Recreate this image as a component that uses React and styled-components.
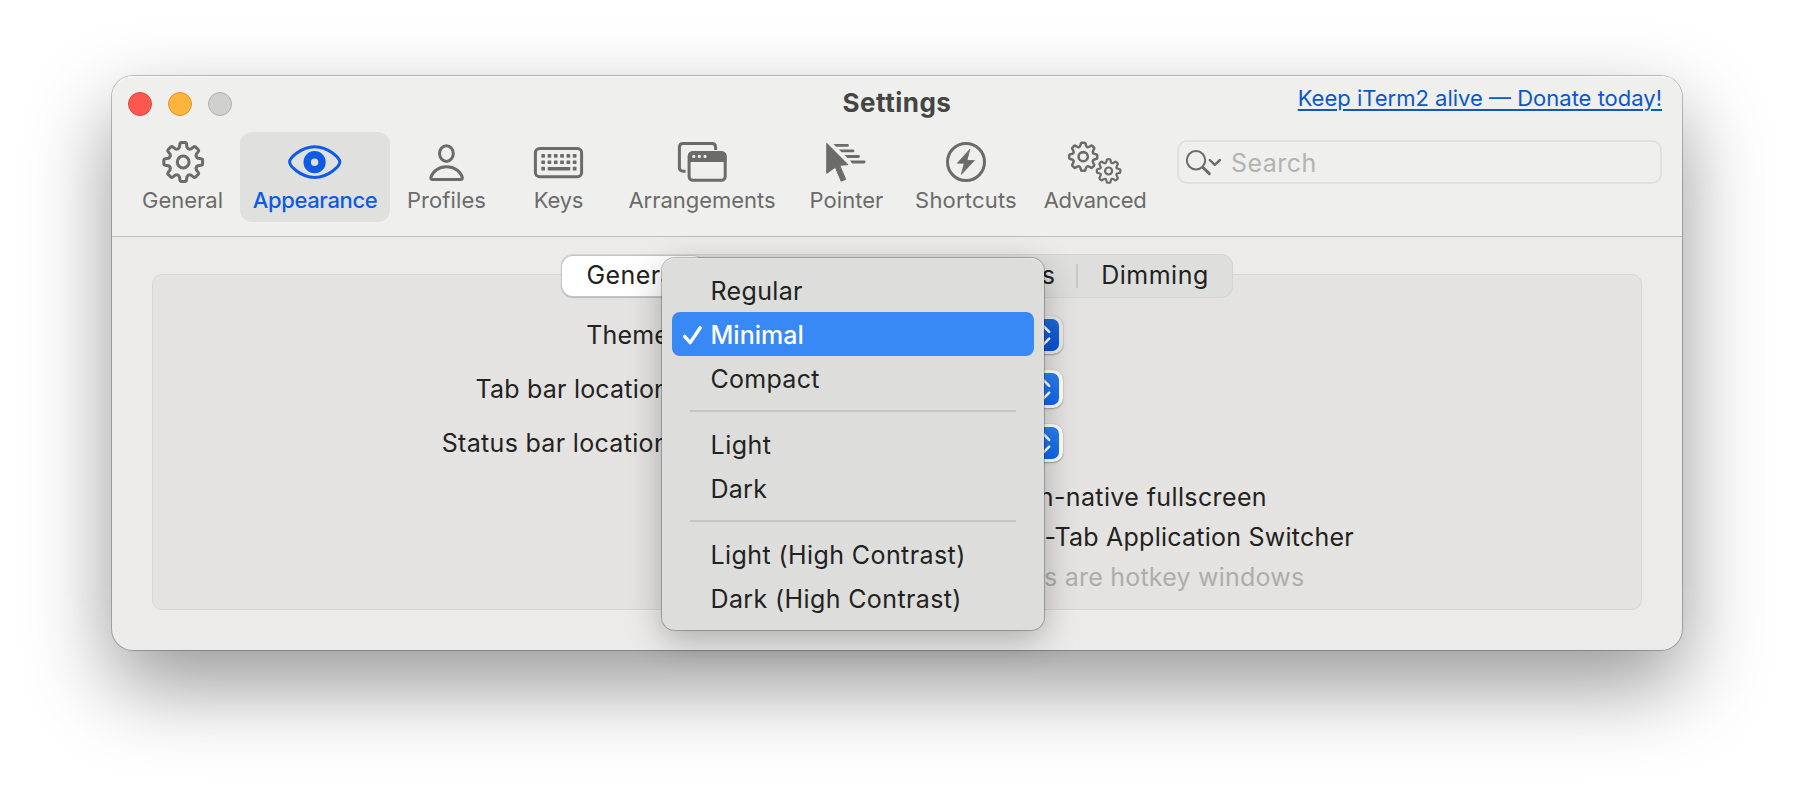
import React from "react";
import styled, { createGlobalStyle, css } from "styled-components";

const color = {
  header: "#efefed",
  body: "#ecebe9",
  panel: "#e4e3e1",
  menu: "#dddddb",
  highlight: "#3888f6",
  text: "#222221",
  icon: "#6b6b69",
  accent: "#0d5be6",
  link: "#0a59c5",
};

const GlobalStyle = createGlobalStyle`
  * { box-sizing: border-box; }
  body {
    margin: 0;
    background: #fff;
    font-family: Inter, "Liberation Sans", sans-serif;
    color: ${color.text};
  }
`;

const Desktop = styled.div`
  width: 1794px;
  height: 798px;
  padding: 76px 112px;
  overflow: hidden;
`;

const Window = styled.main`
  position: relative;
  display: flex;
  flex-direction: column;
  width: 1570px;
  height: 574px;
  border-radius: 21px;
  background: ${color.body};
  box-shadow:
    0 0 0 1px rgba(0, 0, 0, 0.23),
    0 35px 84px rgba(0, 0, 0, 0.41);
`;

const Header = styled.header`
  height: 161px;
  background: ${color.header};
  border-bottom: 1px solid #bebebc;
  border-radius: 21px 21px 0 0;
  box-shadow: inset 0 1px 0 #fafaf9;
`;

const TitleBar = styled.div`
  display: grid;
  grid-template-columns: 1fr auto 1fr;
  height: 56px;
  padding: 0 20px 0 16px;
`;

const TrafficLights = styled.div`
  display: flex;
  align-items: center;
  gap: 16px;
`;

const Light = styled.span`
  width: 24px;
  height: 24px;
  border-radius: 50%;
  background: ${(p) => p.$fill};
  border: 1px solid ${(p) => p.$edge};
`;

const Title = styled.h1`
  margin: 0 0 0 4px;
  font-size: 26px;
  line-height: 54px;
  font-weight: 700;
  letter-spacing: 0.5px;
  color: #454544;
`;

const DonateLink = styled.a`
  justify-self: end;
  font-size: 22px;
  line-height: 44px;
  color: ${color.link};
  text-decoration: underline;
  text-decoration-thickness: 2px;
  text-underline-offset: 2.5px;
`;

const Toolbar = styled.nav`
  display: flex;
  align-items: flex-start;
  padding-left: 13px;
`;

const ToolItem = styled.button`
  display: flex;
  flex-direction: column;
  align-items: center;
  width: ${(p) => p.$width}px;
  height: 90px;
  padding: 6px 0 0;
  border: 0;
  border-radius: 12px;
  background: ${(p) => (p.$active ? "#e0e0df" : "transparent")};
  color: ${(p) => (p.$active ? color.accent : color.icon)};
  font: 400 22px/28px Inter, sans-serif;
  letter-spacing: ${(p) => p.$spacing || 0}px;
  white-space: nowrap;
  ${(p) => p.$active && css`font-weight: 500;`}

  svg {
    display: block;
    width: 60px;
    height: 48px;
  }
`;

const SearchField = styled.div`
  display: flex;
  align-items: center;
  width: 485px;
  height: 44px;
  margin: 8px 0 0 16px;
  padding-left: 6px;
  border: 2px solid #e1e1df;
  border-radius: 10px;
  font-size: 25px;
  letter-spacing: 0.45px;
  color: #b3b3b1;

  svg {
    width: 40px;
    height: 40px;
    margin-right: 6px;
    color: ${color.icon};
  }
`;

const Placeholder = styled.span`
  padding-top: 2px;
`;

const Content = styled.section`
  display: flex;
  flex-direction: column;
  align-items: center;
  padding: 17px 40px 0;
`;

const Segments = styled.div`
  z-index: 1;
  display: flex;
  width: 672px;
  height: 44px;
  border-radius: 12px;
  background: #dededc;
  box-shadow: inset 0 0 0 1px #d4d4d2;
`;

const Segment = styled.div`
  display: flex;
  align-items: center;
  justify-content: center;
  width: ${(p) => p.$width}px;
  padding-bottom: 2px;
  font-size: 25px;
  letter-spacing: ${(p) => p.$spacing ?? 0.4}px;
  ${(p) =>
    p.$selected &&
    css`
      margin: 1.5px 0 2px 1px;
      padding: 0 0 2px 2px;
      border-radius: 11px;
      background: #fff;
      box-shadow: 0 0 0 1px #c4c4c2, 0 1px 2px rgba(0, 0, 0, 0.35);
    `}
`;

const SegmentGap = styled.span`
  flex: 1;
`;

const SegmentDivider = styled.span`
  width: 2px;
  height: 24px;
  margin: 10px -1px 0;
  background: #c8c8c6;
`;

const Panel = styled.div`
  width: 1490px;
  height: 336px;
  margin-top: -24px;
  padding-top: 33px;
  border: 1px solid #d8d7d5;
  border-radius: 10px;
  background: ${color.panel};
`;

const FormRow = styled.div`
  display: flex;
  align-items: center;
  gap: 8px;
  height: 54px;
`;

const FormLabel = styled.label`
  width: 523.5px;
  text-align: right;
  font-size: 25px;
  letter-spacing: ${(p) => p.$spacing}px;
`;

const Popup = styled.div`
  display: flex;
  align-items: center;
  justify-content: flex-end;
  width: 378px;
  height: 38px;
  padding: 0 4px 0 18px;
  border-radius: 10px;
  background: ${(p) => (p.$pressed ? "#e9e9eb" : "#ffffff")};
  box-shadow: 0 0 1px rgba(0, 0, 0, 0.25), 0 1px 2px rgba(0, 0, 0, 0.3);

  svg {
    width: 32px;
    height: 32px;
    border-radius: 7px;
    background: ${(p) =>
      p.$pressed
        ? "linear-gradient(#1a69d8, #0a52d4)"
        : "linear-gradient(#2b80f0, #0f66ee)"};
  }
`;

const Checks = styled.div`
  margin-top: 7px;
`;

const CheckRow = styled.div`
  display: flex;
  align-items: center;
  justify-content: flex-end;
  height: 40px;
  padding-right: ${(p) => p.$inset}px;
  font-size: 25px;
  letter-spacing: ${(p) => p.$spacing}px;
  white-space: nowrap;
  color: ${(p) => (p.$disabled ? "#adadab" : color.text)};
`;

const Menu = styled.ul`
  position: absolute;
  z-index: 2;
  left: 550px;
  top: 182px;
  width: 382px;
  margin: 0;
  padding: 10px;
  list-style: none;
  border-radius: 13px;
  background: ${color.menu};
  box-shadow:
    0 0 0 1px rgba(0, 0, 0, 0.24),
    inset 0 1px 0 #e6e6e4,
    0 10px 34px rgba(0, 0, 0, 0.27);
`;

const MenuItem = styled.li`
  display: flex;
  align-items: center;
  height: 44px;
  border-radius: 8px;
  font-size: 25px;
  letter-spacing: ${(p) => p.$spacing}px;
  ${(p) =>
    p.$selected &&
    css`
      background: ${color.highlight};
      color: #fff;
      font-weight: 500;
    `}
`;

const MenuLabel = styled.span`
  padding-top: 1.5px;
`;

const MenuMark = styled.span`
  width: 38.5px;
  height: 44px;

  svg {
    display: block;
    width: 37px;
    height: 44px;
  }
`;

const MenuSeparator = styled.li`
  height: 2px;
  margin: 10px 18px;
  background: #c6c6c4;
`;

/* Outline of a cog centred on (cx, cy) with eight soft-cornered teeth. */
function cogPath(cx, cy, outer, inner) {
  const at = (deg, r) => {
    const a = (deg * Math.PI) / 180;
    return `${(cx + r * Math.sin(a)).toFixed(2)} ${(cy - r * Math.cos(a)).toFixed(2)}`;
  };
  const parts = [];
  for (let i = 0; i < 8; i += 1) {
    const a = i * 45;
    parts.push(`${i ? "L" : "M"}${at(a - 14, inner + 1)}`);
    parts.push(`L${at(a - 10.5, outer - 1.2)}`);
    parts.push(`Q${at(a - 9.5, outer)} ${at(a - 6, outer)}`);
    parts.push(`L${at(a + 6, outer)}`);
    parts.push(`Q${at(a + 9.5, outer)} ${at(a + 10.5, outer - 1.2)}`);
    parts.push(`L${at(a + 14, inner + 1)}`);
    parts.push(`Q${at(a + 22.5, inner - 1.2)} ${at(a + 31, inner + 1)}`);
  }
  return `${parts.join("")}Z`;
}

const Drawing = ({ children }) => (
  <svg viewBox="0 0 60 48" fill="none" stroke="currentColor" strokeWidth="3" strokeLinecap="round" strokeLinejoin="round">
    {children}
  </svg>
);

const CogIcon = () => (
  <Drawing>
    <path d={cogPath(30.2, 24, 19.5, 14.3)} />
    <circle cx="30.2" cy="24" r="5.9" />
  </Drawing>
);

const EyeIcon = () => (
  <Drawing>
    <path d="M4.6 24C4.6 20.5 15.5 8.7 29.7 8.7S54.8 20.5 54.8 24 44.3 39.4 29.7 39.4 4.6 27.5 4.6 24Z" />
    <circle cx="29.6" cy="24.2" r="7.4" strokeWidth="7.4" />
  </Drawing>
);

const PersonIcon = () => (
  <Drawing>
    <ellipse cx="29.4" cy="15.6" rx="6.9" ry="7.8" />
    <path d="M15.2 41.4C13.7 41.4 13.7 40.4 14 39.2 15.4 33.6 21.4 28.8 29.6 28.8S43.8 33.6 45.2 39.2C45.5 40.4 45.5 41.4 44 41.4Z" />
  </Drawing>
);

const KeyboardIcon = () => (
  <Drawing>
    <rect x="6.4" y="10.5" width="46.2" height="28.2" rx="4.2" />
    <g fill="currentColor" stroke="none">
      {[0, 1].map((row) =>
        [0, 1, 2, 3, 4, 5].map((col) => (
          <rect key={`${row}${col}`} x={12.3 + col * 6.3} y={16 + row * 6.4} width="3.7" height="3.7" rx="0.6" />
        ))
      )}
      <rect x="12.3" y="28.8" width="3.7" height="3.7" rx="0.6" />
      <rect x="18.7" y="28.9" width="22.6" height="3.5" rx="0.6" />
      <rect x="43.8" y="28.8" width="3.7" height="3.7" rx="0.6" />
    </g>
  </Drawing>
);

const WindowsIcon = () => (
  <Drawing>
    <path d="M13.6 33.2H11.2Q7.4 33.2 7.4 29.4V9.3Q7.4 5.5 11.2 5.5H39.8Q43.6 5.5 43.6 9.3V12" strokeLinecap="butt" />
    <rect x="17.1" y="14.6" width="36.1" height="27.6" rx="3.8" />
    <path d="M16 24V18Q16 13.5 20.5 13.5H50Q54.5 13.5 54.5 18V24Z" fill="currentColor" stroke="none" />
    <g fill={color.header} stroke="none">
      <circle cx="21.8" cy="18.4" r="1.6" />
      <circle cx="27.4" cy="18.4" r="1.6" />
      <circle cx="33" cy="18.4" r="1.6" />
    </g>
  </Drawing>
);

const PointerIcon = () => (
  <Drawing>
    <g fill="currentColor" strokeWidth="1">
      <path d="M10 5.6L31 26.7 22.7 27.3 28.7 41.3 24.2 43.2 18.3 29.2 10 35.2Z" />
    </g>
    <g fill="currentColor" stroke="none">
      <path d="M16.4 6H30.5Q31.9 6 31.9 7.4T30.5 8.8H19.2Z" />
      <path d="M21.9 11.5H36Q37.4 11.5 37.4 12.9T36 14.3H24.7Z" />
      <path d="M27.5 17.1H41.5Q42.9 17.1 42.9 18.5T41.5 19.9H30.3Z" />
      <path d="M33 22.6H47.1Q48.5 22.6 48.5 24T47.1 25.4H35.2Z" />
    </g>
  </Drawing>
);

const BoltIcon = () => (
  <Drawing>
    <circle cx="30" cy="24" r="18.5" />
    <path d="M33.7 11.4L21.3 25.2H28.3L25.3 36.4 38.4 22.5H31.1Z" fill="currentColor" strokeWidth="0.8" />
  </Drawing>
);

const CogsIcon = () => (
  <Drawing>
    <path d={cogPath(18.2, 18.7, 14.1, 10.6)} strokeWidth="2.5" />
    <circle cx="18.2" cy="18.7" r="4.6" strokeWidth="2.6" />
    <path d={cogPath(43.6, 33, 11.8, 8.6)} strokeWidth="2.2" />
    <circle cx="43.6" cy="33" r="3.5" strokeWidth="2.2" />
  </Drawing>
);

const SearchIcon = () => (
  <svg viewBox="0 0 40 40" fill="none" stroke="currentColor" strokeLinecap="round" strokeLinejoin="round">
    <circle cx="11" cy="18.3" r="9.2" strokeWidth="2" />
    <path d="M18 25.5L24.3 31.6" strokeWidth="3" />
    <path d="M24.8 18L29.8 22.8 35 18" strokeWidth="2.4" />
  </svg>
);

const Chevrons = () => (
  <svg viewBox="0 0 32 32" fill="none" stroke="#fff" strokeWidth="2.6" strokeLinecap="round" strokeLinejoin="round">
    <path d="M9.8 12.8L16 6.6 22.2 12.8M9.8 19.6L16 25.8 22.2 19.6" />
  </svg>
);

const Checkmark = () => (
  <svg viewBox="0 0 37 44" fill="none" stroke="#fff" strokeWidth="3.4" strokeLinecap="round" strokeLinejoin="round">
    <path d="M12.6 24.4L18.2 30.6 28.2 15.8" />
  </svg>
);

const TOOLS = [
  { label: "General", icon: CogIcon, width: 115, spacing: 0 },
  { label: "Appearance", icon: EyeIcon, width: 150, spacing: -0.36, active: true },
  { label: "Profiles", icon: PersonIcon, width: 113, spacing: 0.1 },
  { label: "Keys", icon: KeyboardIcon, width: 111, spacing: -0.22 },
  { label: "Arrangements", icon: WindowsIcon, width: 176, spacing: -0.03 },
  { label: "Pointer", icon: PointerIcon, width: 113, spacing: 0.04 },
  { label: "Shortcuts", icon: BoltIcon, width: 126, spacing: 0.19 },
  { label: "Advanced", icon: CogsIcon, width: 132, spacing: -0.32 },
];

const FIELDS = [
  { label: "Theme:", spacing: 0.2, pressed: true },
  { label: "Tab bar location:", spacing: 0.2 },
  { label: "Status bar location:", spacing: 0.32 },
];

const CHECKS = [
  { label: "non-native fullscreen", inset: 374, spacing: 0.38 },
  { label: "⌘-Tab Application Switcher", inset: 287, spacing: 0.24 },
  { label: "windows are hotkey windows", inset: 336.5, spacing: 0.23, disabled: true },
];

const THEMES = [
  { label: "Regular", spacing: 0.35 },
  { label: "Minimal", spacing: 0.02, selected: true },
  { label: "Compact", spacing: 0.28 },
  null,
  { label: "Light", spacing: 0.5 },
  { label: "Dark", spacing: 0.25 },
  null,
  { label: "Light (High Contrast)", spacing: 0.41 },
  { label: "Dark (High Contrast)", spacing: 0.38 },
];

export default function App() {
  return (
    <Desktop>
      <GlobalStyle />
      <Window>
        <Header>
          <TitleBar>
            <TrafficLights>
              <Light $fill="#fd5850" $edge="#e0453e" />
              <Light $fill="#fdb43f" $edge="#dc962c" />
              <Light $fill="#d0d0ce" $edge="#b0b0ae" />
            </TrafficLights>
            <Title>Settings</Title>
            <DonateLink>Keep iTerm2 alive — Donate today!</DonateLink>
          </TitleBar>
          <Toolbar>
            {TOOLS.map(({ label, icon: Icon, width, spacing, active }) => (
              <ToolItem key={label} $width={width} $spacing={spacing} $active={active}>
                <Icon />
                {label}
              </ToolItem>
            ))}
            <SearchField>
              <SearchIcon />
              <Placeholder>Search</Placeholder>
            </SearchField>
          </Toolbar>
        </Header>
        <Content>
          <Segments>
            <Segment $width={142} $selected>General</Segment>
            <SegmentGap />
            <Segment $width={118}>Panes</Segment>
            <SegmentDivider />
            <Segment $width={156} $spacing={0.5}>Dimming</Segment>
          </Segments>
          <Panel>
            {FIELDS.map((f) => (
              <FormRow key={f.label}>
                <FormLabel $spacing={f.spacing}>{f.label}</FormLabel>
                <Popup $pressed={f.pressed}>
                  <Chevrons />
                </Popup>
              </FormRow>
            ))}
            <Checks>
              {CHECKS.map((c) => (
                <CheckRow key={c.label} $inset={c.inset} $spacing={c.spacing} $disabled={c.disabled}>
                  {c.label}
                </CheckRow>
              ))}
            </Checks>
          </Panel>
        </Content>
        <Menu>
          {THEMES.map((t, i) =>
            t ? (
              <MenuItem key={t.label} $spacing={t.spacing} $selected={t.selected}>
                <MenuMark>{t.selected && <Checkmark />}</MenuMark>
                <MenuLabel>{t.label}</MenuLabel>
              </MenuItem>
            ) : (
              <MenuSeparator key={i} />
            )
          )}
        </Menu>
      </Window>
    </Desktop>
  );
}
